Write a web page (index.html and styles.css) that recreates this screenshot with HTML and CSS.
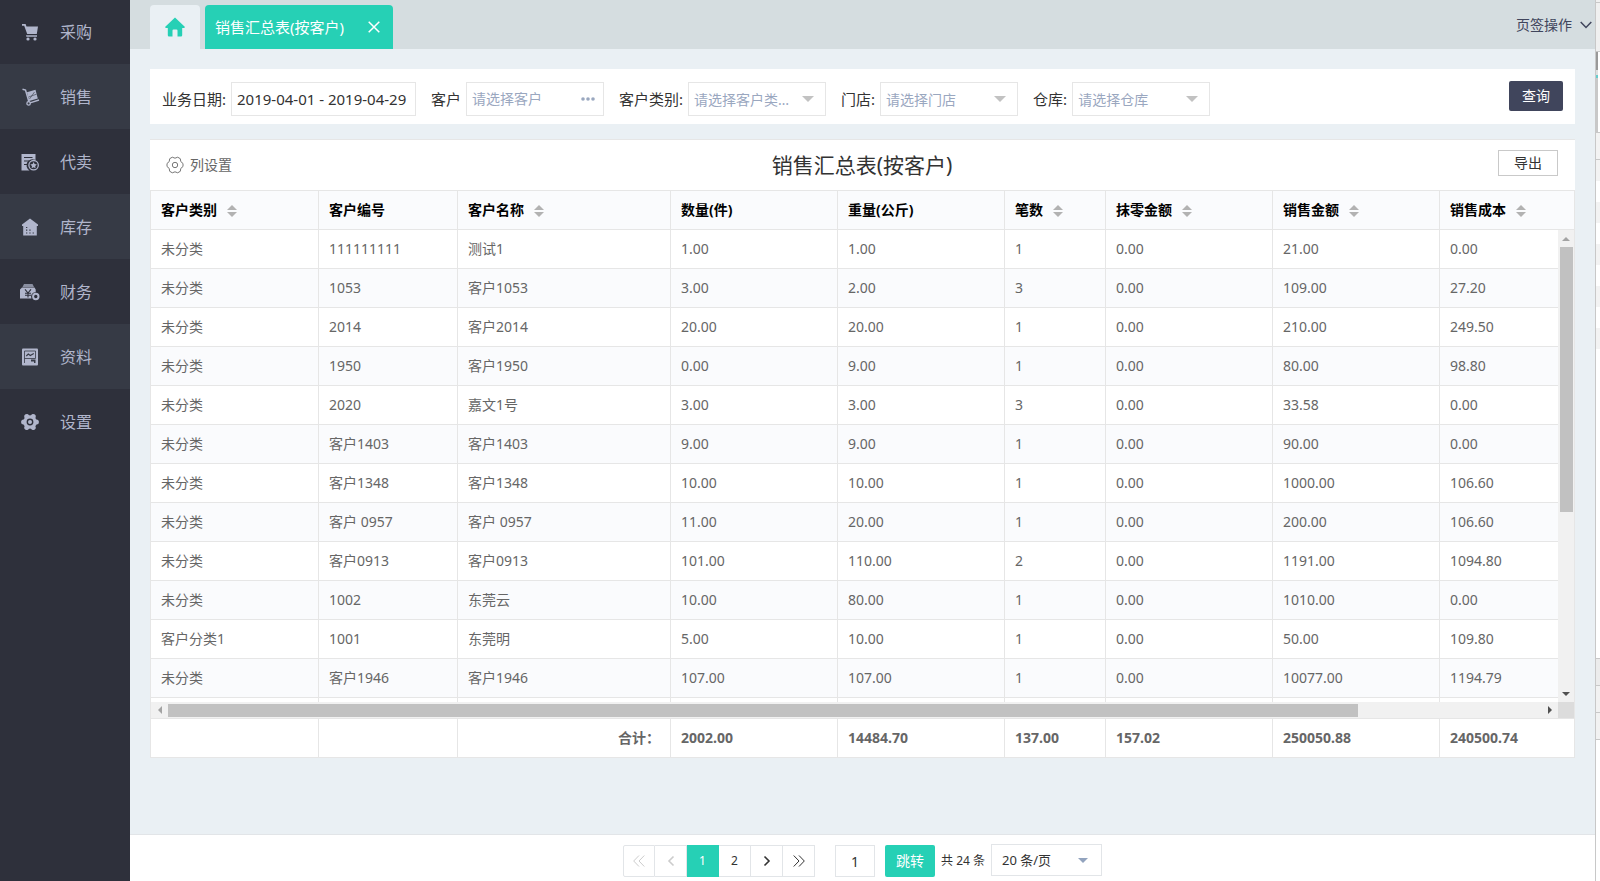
FILE: index.html
```html
<!DOCTYPE html>
<html lang="zh-CN">
<head>
<meta charset="utf-8">
<title>销售汇总表(按客户)</title>
<link rel="stylesheet" href="styles.css">
</head>
<body>
<div class="app">
  <nav class="sidebar">
    <a class="nav-item" href="#"><svg class="nav-icon" viewBox="0 0 20 20"><path d="M2 2h3.600l.9 2.400H18l-1.200 7.600H7.200L4.200 3.800H2z"/><path d="M6 13.200h11v1.500H6.400z"/><circle cx="8" cy="17" r="1.600"/><circle cx="15" cy="17" r="1.600"/></svg>采购</a>
    <a class="nav-item" href="#"><svg class="nav-icon" viewBox="0 0 20 20"><path d="M2.500 2.200l3 .8L9 15" fill="none" stroke="currentColor" stroke-width="1.500"/><path d="M6.900 5.200l8.600-2.400 2.300 8.600-8.600 2.600z"/><path d="M8.500 10l8-2.800M9.500 12l5-7" stroke="#363a45" stroke-width=".6"/><path d="M10 15.800l9-2.800" stroke="currentColor" stroke-width="1.400"/><circle cx="8.600" cy="16.400" r="1.700" fill="none" stroke="currentColor" stroke-width="1.300"/></svg>销售</a>
    <a class="nav-item" href="#"><svg class="nav-icon" viewBox="0 0 20 20"><path d="M1.500 2H15.500v6a6 6 0 0 0-6 10.500h-8z"/><path d="M4 5.500h8.500M4 9h5M4 12.500h3" stroke="#2e303b" stroke-width="1.200"/><circle cx="13.600" cy="13.200" r="4.700" fill="none" stroke="currentColor" stroke-width="1.300"/><path d="M13.600 10l1 2.100 2.300.3-1.700 1.600.4 2.300-2-1.100-2 1.100.4-2.300-1.700-1.600 2.300-.3z"/></svg>代卖</a>
    <a class="nav-item" href="#"><svg class="nav-icon" viewBox="0 0 20 20"><path d="M10 1.500l8 6v1.500H16.800v9.500H3.200V9H2V7.500z"/><path d="M6 10.500h1.300M6 13.200h1.300M9.300 13.200h1.300M6 16h1.300M9.300 16h1.300M12.600 16h1.300" stroke="#363a45" stroke-width="1.200"/></svg>库存</a>
    <a class="nav-item" href="#"><svg class="nav-icon" viewBox="0 0 20 20"><path d="M2.500 5L4 2h8.500L14 5z" opacity=".7"/><path d="M0 7.500l2-2h12.500l1.200 2v2.800a4.300 4.300 0 0 0-4.300 6.200H0z"/><path d="M5 7.300l3 3.700 3-3.700M5 11.300h6M5 13.300h6M8 11v4.600" fill="none" stroke="#2e303b" stroke-width="1.100"/><circle cx="15.800" cy="14.500" r="2.700" fill="none" stroke="currentColor" stroke-width="2"/></svg>财务</a>
    <a class="nav-item" href="#"><svg class="nav-icon" viewBox="0 0 20 20"><rect x="2" y="1.500" width="16" height="17" rx="1"/><path d="M4.500 16V4h11v7.500h-11" fill="none" stroke="#363a45" stroke-width=".8"/><path d="M6.300 9l2-2 2 1.500L13.800 6.500" fill="none" stroke="#363a45" stroke-width="1.100"/><path d="M11 12.500h4.500V16h-1.500v-1.500h-3z" fill="#363a45"/></svg>资料</a>
    <a class="nav-item" href="#"><svg class="nav-icon" viewBox="0 0 20 20"><circle cx="10" cy="10" r="6.800"/><g stroke="currentColor" stroke-width="5" stroke-linecap="round"><path d="M3.600 10h12.800M6.800 4.500l6.400 11M13.200 4.500l-6.400 11"/></g><circle cx="10" cy="10" r="2.700" fill="none" stroke="#2e303b" stroke-width="1.400"/></svg>设置</a>
  </nav>

  <div class="page">
    <header class="tabs">
      <a class="tab tab-home" href="#" aria-label="首页"><svg width="20" height="20" viewBox="0 0 20 20"><path d="M10 0.500L20 10l-.8 1H17.200v7.300q0 1.200-1.200 1.200h-3.500V13.500a1 1 0 0 0-1-1h-3a1 1 0 0 0-1 1v6H4q-1.200 0-1.200-1.200V11H.8L0 10z"/></svg></a>
      <div class="tab tab-current"><span>销售汇总表(按客户)</span><button class="tab-close" type="button" aria-label="关闭"><svg width="12" height="12" viewBox="0 0 12 12"><path d="M.7.700l10.600 10.600M11.300.700L.7 11.300"/></svg></button></div>
      <button class="tab-menu" type="button">页签操作<svg width="12" height="8" viewBox="0 0 12 8"><path d="M.7 1L6 6.500 11.300 1"/></svg></button>
    </header>

    <main class="content">
      <form class="filters">
        <div class="field"><label for="date">业务日期:</label><input class="control date" id="date" type="text" value="2019-04-01 - 2019-04-29"></div>
        <div class="field"><label for="customer">客户</label><div class="picker control"><input id="customer" type="text" placeholder="请选择客户"><button type="button" aria-label="更多"><svg width="14" height="4" viewBox="0 0 14 4"><circle cx="2" cy="2" r="1.800"/><circle cx="7" cy="2" r="1.800"/><circle cx="12" cy="2" r="1.800"/></svg></button></div></div>
        <div class="field"><label for="kind">客户类别:</label><select class="control" id="kind"><option>请选择客户类别</option></select></div>
        <div class="field"><label for="shop">门店:</label><select class="control" id="shop"><option>请选择门店</option></select></div>
        <div class="field"><label for="depot">仓库:</label><select class="control" id="depot"><option>请选择仓库</option></select></div>
        <button class="search" type="button">查询</button>
      </form>

      <section class="report">
        <div class="toolbar">
          <button class="columns" type="button"><svg width="18" height="18" viewBox="0 0 18 18"><path d="M6.300 1.200Q9 3.200 11.700 1.200l2.600 1.500q-.4 3.300 2.700 4.800v3q-3.100 1.500-2.700 4.800l-2.600 1.500Q9 14.800 6.300 16.800l-2.600-1.500Q4.100 12 1 10.500v-3Q4.100 6 3.700 2.700z"/><circle cx="9" cy="9" r="2.700"/></svg>列设置</button>
          <h1>销售汇总表(按客户)</h1>
          <button class="export" type="button">导出</button>
        </div>

        <div class="grid">
          <table class="head">
            <colgroup><col class="c1"><col class="c2"><col class="c3"><col class="c4"><col class="c4"><col class="c6"><col class="c4"><col class="c4"><col></colgroup>
            <thead><tr><th>客户类别<i class="sort"></i></th><th>客户编号</th><th>客户名称<i class="sort"></i></th><th>数量(件)</th><th>重量(公斤)</th><th>笔数<i class="sort"></i></th><th>抹零金额<i class="sort"></i></th><th>销售金额<i class="sort"></i></th><th>销售成本<i class="sort"></i></th></tr></thead>
          </table>
          <div class="viewport">
            <div class="rows">
              <table>
                <colgroup><col class="c1"><col class="c2"><col class="c3"><col class="c4"><col class="c4"><col class="c6"><col class="c4"><col class="c4"><col></colgroup>
                <tbody>
                  <tr><td>未分类</td><td>111111111</td><td>测试1</td><td>1.00</td><td>1.00</td><td>1</td><td>0.00</td><td>21.00</td><td>0.00</td></tr>
                  <tr><td>未分类</td><td>1053</td><td>客户1053</td><td>3.00</td><td>2.00</td><td>3</td><td>0.00</td><td>109.00</td><td>27.20</td></tr>
                  <tr><td>未分类</td><td>2014</td><td>客户2014</td><td>20.00</td><td>20.00</td><td>1</td><td>0.00</td><td>210.00</td><td>249.50</td></tr>
                  <tr><td>未分类</td><td>1950</td><td>客户1950</td><td>0.00</td><td>9.00</td><td>1</td><td>0.00</td><td>80.00</td><td>98.80</td></tr>
                  <tr><td>未分类</td><td>2020</td><td>嘉文1号</td><td>3.00</td><td>3.00</td><td>3</td><td>0.00</td><td>33.58</td><td>0.00</td></tr>
                  <tr><td>未分类</td><td>客户1403</td><td>客户1403</td><td>9.00</td><td>9.00</td><td>1</td><td>0.00</td><td>90.00</td><td>0.00</td></tr>
                  <tr><td>未分类</td><td>客户1348</td><td>客户1348</td><td>10.00</td><td>10.00</td><td>1</td><td>0.00</td><td>1000.00</td><td>106.60</td></tr>
                  <tr><td>未分类</td><td>客户 0957</td><td>客户 0957</td><td>11.00</td><td>20.00</td><td>1</td><td>0.00</td><td>200.00</td><td>106.60</td></tr>
                  <tr><td>未分类</td><td>客户0913</td><td>客户0913</td><td>101.00</td><td>110.00</td><td>2</td><td>0.00</td><td>1191.00</td><td>1094.80</td></tr>
                  <tr><td>未分类</td><td>1002</td><td>东莞云</td><td>10.00</td><td>80.00</td><td>1</td><td>0.00</td><td>1010.00</td><td>0.00</td></tr>
                  <tr><td>客户分类1</td><td>1001</td><td>东莞明</td><td>5.00</td><td>10.00</td><td>1</td><td>0.00</td><td>50.00</td><td>109.80</td></tr>
                  <tr><td>未分类</td><td>客户1946</td><td>客户1946</td><td>107.00</td><td>107.00</td><td>1</td><td>0.00</td><td>10077.00</td><td>1194.79</td></tr>
                  <tr><td></td><td></td><td></td><td></td><td></td><td></td><td></td><td></td><td></td></tr>
                </tbody>
              </table>
            </div>
            <div class="bar bar-y"><i class="arrow up"></i><div class="track"><div class="thumb"></div></div><i class="arrow down"></i></div>
            <div class="bar bar-x"><i class="arrow left"></i><div class="track"><div class="thumb"></div></div><i class="arrow right"></i></div>
            <div class="corner"></div>
          </div>
          <table class="total">
            <colgroup><col class="c1"><col class="c2"><col class="c3"><col class="c4"><col class="c4"><col class="c6"><col class="c4"><col class="c4"><col></colgroup>
            <tbody><tr><td></td><td></td><td class="sum">合计：</td><td>2002.00</td><td>14484.70</td><td>137.00</td><td>157.02</td><td>250050.88</td><td>240500.74</td></tr></tbody>
          </table>
        </div>
      </section>
    </main>

    <footer class="pager">
      <div class="pages">
        <button type="button" disabled aria-label="首页"><svg width="12" height="12" viewBox="0 0 12 12"><path d="M6 .5L.7 6 6 11.500M11.300.5L6 6l5.300 5.500"/></svg></button>
        <button type="button" disabled aria-label="上一页"><svg class="bold" width="12" height="12" viewBox="0 0 12 12"><path d="M8.500 1.500L4 6l4.500 4.500"/></svg></button>
        <button type="button" class="on">1</button>
        <button type="button">2</button>
        <button type="button" aria-label="下一页"><svg class="bold" width="12" height="12" viewBox="0 0 12 12"><path d="M3.500 1.500L8 6l-4.500 4.500"/></svg></button>
        <button type="button" aria-label="末页"><svg width="12" height="12" viewBox="0 0 12 12"><path d="M.7.500L6 6 .7 11.500M6 .5L11.300 6 6 11.500"/></svg></button>
      </div>
      <input class="goto" type="text" value="1" aria-label="页码">
      <button class="jump" type="button">跳转</button>
      <span class="count">共 24 条</span>
      <select class="size" aria-label="每页条数"><option>20 条/页</option></select>
    </footer>
  </div>
  <div class="edge"><i class="mark"></i></div>
</div>
</body>
</html>
```
FILE: styles.css
```css
* { box-sizing: border-box; }
body {
  margin: 0;
  font: 14px/20px "Noto Sans", "Noto Sans CJK SC", sans-serif;
  color: #333;
}
button, input, select { font: inherit; color: inherit; margin: 0; border-radius: 0; }
button { background: none; border: 0; padding: 0; }
a { color: inherit; text-decoration: none; }
svg { flex: none; }
.app { display: flex; min-height: 100vh; }

.sidebar { width: 130px; flex: none; background: #2e303b; color: #b1b6cc; }
.nav-item {
  display: flex; align-items: center; gap: 20px;
  height: 65px; padding-left: 20px; font-size: 16px;
}
.nav-item:first-child { height: 64px; }
.nav-item:nth-child(even) { background: #363a45; }
.nav-icon { width: 20px; height: 20px; fill: currentColor; }

.page { flex: 1; min-width: 0; display: flex; flex-direction: column; background: #eaf0f4; }
.tabs { display: flex; align-items: flex-end; gap: 5px; height: 49px; padding-left: 20px; background: #d5dde0; }
.tab { display: flex; align-items: center; height: 44px; border-radius: 4px 4px 0 0; }
.tab-home { width: 50px; justify-content: center; background: #eaf0f4; }
.tab-home svg { fill: #26d0b5; }
.tab-current { gap: 24px; padding: 0 13px 0 10px; background: #26d0b5; color: #fff; font-size: 15px; }
.tab-close { display: flex; }
.tab-close svg { fill: none; stroke: #fff; stroke-width: 1.500; }
.tab-menu { display: flex; align-items: center; align-self: stretch; gap: 8px; margin-left: auto; padding-right: 3px; color: #40455c; }
.tab-menu svg { fill: none; stroke: currentColor; stroke-width: 1.500; }

.content { flex: 1; padding: 20px 20px 0; }
.filters { display: flex; gap: 15px; height: 55px; padding: 13px 12px 0; background: #fff; }
.field { display: flex; gap: 5px; height: 34px; line-height: 34px; font-size: 15px; }
.control { width: 138px; height: 34px; border: 1px solid #e6e6e6; background: #fff; padding: 0 5px; outline: 0; }
.control.date { width: 185px; }
.picker { display: flex; align-items: center; gap: 4px; padding-right: 8px; }
.picker input { flex: 1; min-width: 0; height: 30px; border: 0; padding: 0; background: none; outline: 0; font-size: 14px; }
.picker input::placeholder { color: #9aa7bf; opacity: 1; }
.picker button { display: flex; }
.picker svg { fill: #9aa7bf; }
select { appearance: none; text-overflow: ellipsis; }
select.control {
  color: #9aa7bf; font-size: 14px; padding-right: 34px;
  background: #fff url("data:image/svg+xml,%3Csvg xmlns='http://www.w3.org/2000/svg' width='12' height='6'%3E%3Cpath d='M0 0h12L6 6z' fill='%23c2c2c2'/%3E%3C/svg%3E") no-repeat right 11px center;
}
.search { width: 54px; height: 30px; margin: -1px 0 0 auto; border-radius: 2px; background: #40455c; color: #fff; }

.report { margin-top: 15px; border-top: 1px solid #e6e6e6; background: #fff; }
.toolbar { display: grid; grid-template-columns: 1fr auto 1fr; align-items: center; height: 50px; padding: 0 17px 0 16px; }
.columns { display: flex; align-items: center; gap: 6px; color: #666; }
.columns svg { fill: none; stroke: #777; stroke-width: 1; }
.toolbar h1 { margin: 0; font-size: 21px; line-height: 30px; font-weight: 400; }
.export { justify-self: end; width: 60px; height: 26px; margin-bottom: 4px; border: 1px solid #c9c9c9; }

.grid { border: 1px solid #e6e6e6; }
table { width: 100%; table-layout: fixed; border-collapse: separate; border-spacing: 0; color: #666; }
th, td { height: 39px; padding: 0 10px; border: solid #e6e6e6; border-width: 0 1px 1px 0; text-align: left; white-space: nowrap; overflow: hidden; }
th:last-child, td:last-child { border-right: 0; }
th { background: #fafbfd; color: #000; font-weight: 700; }
.rows tr:nth-child(even) { background: #fafbfd; }
.c1 { width: 168px; }
.c2 { width: 139px; }
.c3 { width: 213px; }
.c4 { width: 167px; }
.c6 { width: 101px; }
.sort { display: inline-flex; flex-direction: column; gap: 2px; margin-left: 10px; vertical-align: middle; }
.sort::before, .sort::after { content: ""; border: 5px solid transparent; }
.sort::before { border-top: 0; border-bottom-color: #b2b2b2; }
.sort::after { border-bottom: 0; border-top-color: #b2b2b2; }

.viewport { display: grid; grid-template-columns: minmax(0, 1fr) 16px; grid-template-rows: 472px 16px; border-bottom: 1px solid #e6e6e6; }
.rows { overflow: hidden; }
.bar { display: flex; align-items: center; background: #f1f1f1; }
.bar-y { flex-direction: column; }
.track { flex: 1; display: flex; }
.thumb { background: #c1c1c1; }
.bar-y .track { width: 13px; }
.bar-y .thumb { width: 100%; height: 60.5%; }
.bar-x .track { height: 13px; }
.bar-x .thumb { width: 86.7%; }
.arrow { display: grid; place-items: center; width: 17px; height: 17px; }
.arrow::before { content: ""; border: 4px solid transparent; }
.up::before { border-top: 0; border-bottom-color: #a3a3a3; }
.down::before { border-bottom: 0; border-top-color: #505050; }
.left::before { border-left: 0; border-right-color: #a3a3a3; }
.right::before { border-right: 0; border-left-color: #505050; }
.corner { background: #dcdcdc; }
.total td { height: 38px; border-bottom: 0; font-weight: 700; }
.total .sum { text-align: right; }

.pager { display: flex; justify-content: center; align-items: flex-start; height: 47px; padding-top: 10px; border-top: 1px solid #e2e5e8; background: #fff; }
.pages { display: flex; }
.pages button { display: flex; justify-content: center; align-items: center; width: 32px; height: 32px; border: 1px solid #e2e5e8; border-left-width: 0; font-size: 12px; }
.pages button:first-child { border-left-width: 1px; border-radius: 2px 0 0 2px; }
.pages button.on { border-color: #26d0b5; background: #26d0b5; color: #fff; }
.pages svg { fill: none; stroke: currentColor; stroke-width: 1; }
.pages svg.bold { stroke-width: 1.600; }
.pages button:disabled { color: #ccc; }
.goto { width: 40px; height: 32px; margin: 0 10px 0 20px; padding: 0; border: 1px solid #e2e5e8; text-align: center; }
.jump { width: 50px; height: 32px; border-radius: 2px; background: #26d0b5; color: #fff; }
.count { margin: 0 6px; line-height: 32px; font-size: 12px; }
.size {
  width: 111px; height: 32px; margin-top: -1px; padding: 0 10px; border: 1px solid #e2e5e8; font-size: 13px;
  background: #fff url("data:image/svg+xml,%3Csvg xmlns='http://www.w3.org/2000/svg' width='10' height='5'%3E%3Cpath d='M0 0h10L5 5z' fill='%2392a3be'/%3E%3C/svg%3E") no-repeat right 13px center;
}

.edge {
  width: 5px; flex: none; padding-top: 52px; border-left: 1px solid #c8c8c8;
  background: linear-gradient(#f0f0f0 2px, #c8c8c8 2px 3px, #f0f0f0 3px 51px, #c8c8c8 51px 52px, #fff 52px 132px, #c8c8c8 132px 133px, #f3f3f3 133px 159px, #c8c8c8 159px 160px, #f3f3f3 160px 181px, #fff 181px 202px, #f3f3f3 202px 223px, #fff 223px 244px, #f3f3f3 244px 265px, #fff 265px 286px, #f3f3f3 286px 307px, #fff 307px 328px, #f3f3f3 328px 349px, #fff 349px 658px, #c8c8c8 658px 659px, #ececec 659px 685px, #c8c8c8 685px 686px, #f2f2f2 686px 712px, #c8c8c8 712px 713px, #f2f2f2 713px 739px, #c8c8c8 739px 740px, #fff 740px);
}
.mark { display: block; width: 2px; height: 80px; background: linear-gradient(#999 18px, #e0e0e0 18px 23px, #6cc 23px 26px, #c8c8c8 26px); }
```
